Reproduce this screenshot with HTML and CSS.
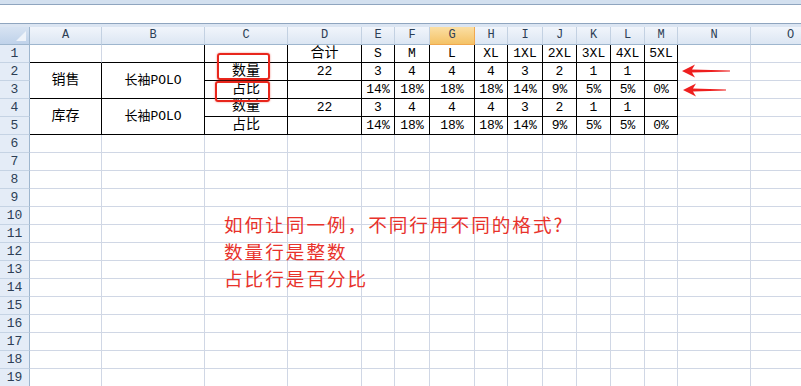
FILE: index.html
```html
<!DOCTYPE html>
<html lang="zh">
<head>
<meta charset="UTF-8">
<title>Sheet1</title>
<link rel="stylesheet" href="styles.css">
</head>
<body>
<div class="sheet">
  <div class="ribbon-edge"></div>
  <div class="formula-bar"></div>
  <div class="bar-gap"></div>

  <table class="grid">
    <colgroup>
      <col style="width:30px"><col style="width:72px"><col style="width:103px"><col style="width:83px">
      <col style="width:74px"><col style="width:33px"><col style="width:35px"><col style="width:45px">
      <col style="width:33px"><col style="width:35px"><col style="width:34px"><col style="width:34px">
      <col style="width:34px"><col style="width:33px"><col style="width:73px"><col style="width:80px">
    </colgroup>
    <thead>
      <tr class="col-head">
        <th class="corner"></th><th>A</th><th>B</th><th>C</th><th>D</th><th>E</th><th>F</th>
        <th class="active">G</th><th>H</th><th>I</th><th>J</th><th>K</th><th>L</th><th>M</th><th>N</th><th>O</th>
      </tr>
    </thead>
    <tbody>
      <tr>
        <th class="rh">1</th><td class="kb"></td><td class="k"></td><td class="k"></td><td class="k cn">合计</td>
        <td class="k">S</td><td class="k">M</td><td class="k">L</td><td class="k">XL</td><td class="k">1XL</td>
        <td class="k">2XL</td><td class="k">3XL</td><td class="k">4XL</td><td class="k">5XL</td><td></td><td></td>
      </tr>
      <tr>
        <th class="rh">2</th><td class="k cn mid" rowspan="2">销售</td><td class="k mid" rowspan="2">长袖POLO</td>
        <td class="k cn">数量</td><td class="k">22</td><td class="k">3</td><td class="k">4</td><td class="k">4</td>
        <td class="k">4</td><td class="k">3</td><td class="k">2</td><td class="k">1</td><td class="k">1</td><td class="k"></td><td></td><td></td>
      </tr>
      <tr>
        <th class="rh">3</th><td class="k cn">占比</td><td class="k"></td><td class="k">14%</td><td class="k">18%</td>
        <td class="k">18%</td><td class="k">18%</td><td class="k">14%</td><td class="k">9%</td><td class="k">5%</td>
        <td class="k">5%</td><td class="k">0%</td><td></td><td></td>
      </tr>
      <tr>
        <th class="rh">4</th><td class="k cn mid" rowspan="2">库存</td><td class="k mid" rowspan="2">长袖POLO</td>
        <td class="k cn up">数量</td><td class="k">22</td><td class="k">3</td><td class="k">4</td><td class="k">4</td>
        <td class="k">4</td><td class="k">3</td><td class="k">2</td><td class="k">1</td><td class="k">1</td><td class="k"></td><td></td><td></td>
      </tr>
      <tr>
        <th class="rh">5</th><td class="k cn">占比</td><td class="k"></td><td class="k">14%</td><td class="k">18%</td>
        <td class="k">18%</td><td class="k">18%</td><td class="k">14%</td><td class="k">9%</td><td class="k">5%</td>
        <td class="k">5%</td><td class="k">0%</td><td></td><td></td>
      </tr>
      <tr><th class="rh">6</th><td></td><td></td><td></td><td></td><td></td><td></td><td></td><td></td><td></td><td></td><td></td><td></td><td></td><td></td><td></td></tr>
      <tr><th class="rh">7</th><td></td><td></td><td></td><td></td><td></td><td></td><td></td><td></td><td></td><td></td><td></td><td></td><td></td><td></td><td></td></tr>
      <tr><th class="rh">8</th><td></td><td></td><td></td><td></td><td></td><td></td><td></td><td></td><td></td><td></td><td></td><td></td><td></td><td></td><td></td></tr>
      <tr><th class="rh">9</th><td></td><td></td><td></td><td></td><td></td><td></td><td></td><td></td><td></td><td></td><td></td><td></td><td></td><td></td><td></td></tr>
      <tr><th class="rh">10</th><td></td><td></td><td></td><td></td><td></td><td></td><td></td><td></td><td></td><td></td><td></td><td></td><td></td><td></td><td></td></tr>
      <tr><th class="rh">11</th><td></td><td></td><td></td><td></td><td></td><td></td><td></td><td></td><td></td><td></td><td></td><td></td><td></td><td></td><td></td></tr>
      <tr><th class="rh">12</th><td></td><td></td><td></td><td></td><td></td><td></td><td></td><td></td><td></td><td></td><td></td><td></td><td></td><td></td><td></td></tr>
      <tr><th class="rh">13</th><td></td><td></td><td></td><td></td><td></td><td></td><td></td><td></td><td></td><td></td><td></td><td></td><td></td><td></td><td></td></tr>
      <tr><th class="rh">14</th><td></td><td></td><td></td><td></td><td></td><td></td><td></td><td></td><td></td><td></td><td></td><td></td><td></td><td></td><td></td></tr>
      <tr><th class="rh">15</th><td></td><td></td><td></td><td></td><td></td><td></td><td></td><td></td><td></td><td></td><td></td><td></td><td></td><td></td><td></td></tr>
      <tr><th class="rh">16</th><td></td><td></td><td></td><td></td><td></td><td></td><td></td><td></td><td></td><td></td><td></td><td></td><td></td><td></td><td></td></tr>
      <tr><th class="rh">17</th><td></td><td></td><td></td><td></td><td></td><td></td><td></td><td></td><td></td><td></td><td></td><td></td><td></td><td></td><td></td></tr>
      <tr><th class="rh">18</th><td></td><td></td><td></td><td></td><td></td><td></td><td></td><td></td><td></td><td></td><td></td><td></td><td></td><td></td><td></td></tr>
      <tr><th class="rh">19</th><td></td><td></td><td></td><td></td><td></td><td></td><td></td><td></td><td></td><td></td><td></td><td></td><td></td><td></td><td></td></tr>
    </tbody>
  </table>

  <!-- annotations drawn on top of the sheet -->
  <div class="callout callout-qty"></div>
  <div class="callout callout-pct"></div>
  <svg class="arrow arrow-qty" width="48" height="14" viewBox="0 0 48 14">
    <path d="M0 7 L13 0.5 L10 5.5 L48 6.4 L48 7.6 L10 8.5 L13 13.5 Z" fill="#ee1f1f"/>
  </svg>
  <svg class="arrow arrow-pct" width="43" height="14" viewBox="0 0 43 14">
    <path d="M0 7 L13 0.5 L10 5.5 L43 6.4 L43 7.6 L10 8.5 L13 13.5 Z" fill="#ee1f1f"/>
  </svg>
  <div class="note">
    <div>如何让同一例，不同行用不同的格式?</div>
    <div>数量行是整数</div>
    <div>占比行是百分比</div>
  </div>
</div>
</body>
</html>
```

FILE: styles.css
```css
body {
  margin: 0;
  background-color: #fff;
  overflow: hidden;
  font-family: "Liberation Mono", "Noto Sans CJK SC", monospace;
}

.sheet {
  position: relative;
  width: 801px;
  height: 386px;
  overflow: hidden;
}

.ribbon-edge {
  height: 4px;
  background-color: #d3e0ef;
}

.formula-bar {
  height: 18px;
  background-color: #fff;
  border-top: 1px solid #8fa5bf;
  border-bottom: 1px solid #8fa5bf;
}

.bar-gap {
  height: 3px;
  background-color: #dbe5f2;
}

.grid {
  border-collapse: separate;
  border-spacing: 0;
  table-layout: fixed;
  width: 831px;
}

.grid td {
  height: 17px;
  padding: 0;
  border-right: 1px solid #d0d7e5;
  border-bottom: 1px solid #d0d7e5;
  text-align: center;
  vertical-align: bottom;
  font-size: 13px;
  line-height: 17px;
  color: #000;
  white-space: nowrap;
  overflow: hidden;
}

.grid td.cn {
  font-size: 14px;
}

.grid td.mid {
  vertical-align: middle;
}

.grid td.up {
  vertical-align: top;
  line-height: 15px;
}

.grid td.k {
  border-right-color: #000;
  border-bottom-color: #000;
}

.grid td.kb {
  border-bottom-color: #000;
}

.col-head th {
  height: 17px;
  padding: 0;
  font-weight: normal;
  font-size: 12px;
  line-height: 17px;
  color: #2c3e55;
  background: linear-gradient(#f1f5fb, #dce6f3);
  border-right: 1px solid #c3d1e2;
  border-bottom: 1px solid #9eb6ce;
}

.col-head th.active {
  background: linear-gradient(#fbdfa4, #f4c266);
  border-right-color: #f0a84f;
  border-bottom-color: #f0a84f;
}

.col-head th.corner {
  position: relative;
  background: linear-gradient(#d7e3f2, #bfd2ea);
  border-right-color: #9eb6ce;
}

.col-head th.corner::after {
  content: "";
  position: absolute;
  right: 3px;
  bottom: 3px;
  border-left: 10px solid transparent;
  border-bottom: 10px solid #eef3fa;
}

.rh {
  height: 17px;
  padding: 0;
  font-weight: normal;
  font-size: 13px;
  line-height: 17px;
  color: #2c3e55;
  background-color: #e4ecf7;
  border-right: 1px solid #9eb6ce;
  border-bottom: 1px solid #c5d3e4;
}

.callout {
  position: absolute;
  border: 2px solid #e8261c;
  border-radius: 3px;
  box-shadow: 0 0 2px rgba(232, 38, 28, 0.6);
}

.callout-qty {
  left: 217px;
  top: 53px;
  width: 49px;
  height: 23px;
}

.callout-pct {
  left: 215px;
  top: 81px;
  width: 51px;
  height: 17px;
}

.arrow {
  position: absolute;
}

.arrow-qty {
  left: 682px;
  top: 64px;
}

.arrow-pct {
  left: 683px;
  top: 83px;
}

.note {
  position: absolute;
  left: 224px;
  top: 210px;
  font-family: "Noto Sans CJK SC", sans-serif;
  font-size: 18.6px;
  letter-spacing: 2px;
  line-height: 27px;
  color: #e8322b;
}
```
